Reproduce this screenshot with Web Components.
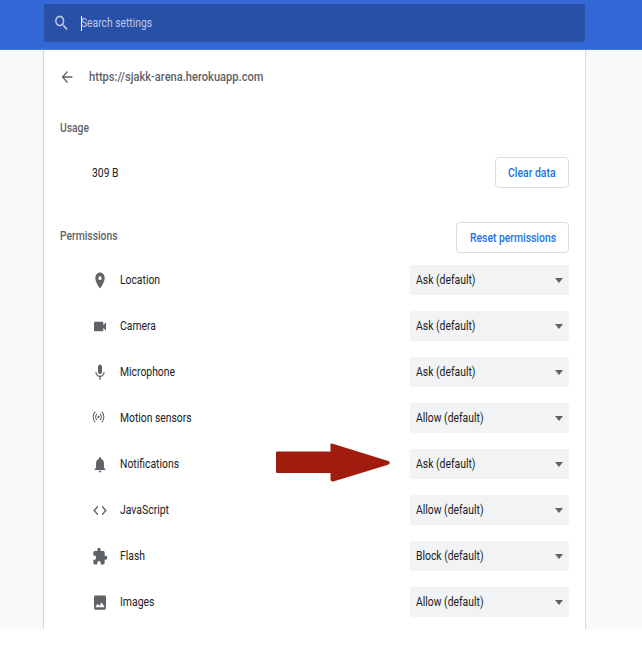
<!DOCTYPE html>
<html lang="en">
<head>
<meta charset="utf-8">
<title>Settings</title>
<style>
html,body{margin:0;height:100%;background:#fff}
body{font:400 12.6px/16px Roboto,sans-serif;color:#202124;overflow:hidden}
</style>
</head>
<body>
<settings-page></settings-page>
<script>
const define = (name, html, setup) => customElements.define(name, class extends HTMLElement {
  connectedCallback() {
    if (this.shadowRoot) return;
    const t = document.createElement('template');
    t.innerHTML = html;
    this.attachShadow({ mode: 'open' }).append(t.content.cloneNode(true));
    if (setup) setup(this, this.shadowRoot);
  }
});

// Narrow label: condenses its text horizontally to the width given in "w".
define('narrow-text', `<style>
:host{display:block;white-space:nowrap;flex:none;overflow:visible}
span{display:inline-block;transform-origin:0 50%}
</style><span></span>`, (host, root) => {
  const s = root.querySelector('span'), w = +host.getAttribute('w');
  s.textContent = host.getAttribute('text');
  host.style.width = w + 'px';
  s.style.transform = `scaleX(${w / s.getBoundingClientRect().width})`;
});

const icons = {
  search: '<path d="M15.5 14h-.79l-.28-.27A6.47 6.47 0 0 0 16 9.5 6.5 6.5 0 1 0 9.500 16c1.610 0 3.090-.59 4.230-1.570l.27.28v.79l5 4.990L20.490 19l-4.990-5zm-6 0C7.010 14 5 11.990 5 9.500S7.010 5 9.500 5 14 7.010 14 9.500 11.990 14 9.500 14z"/>',
  back: '<path d="M20 11H7.830l5.590-5.590L12 4l-8 8 8 8 1.410-1.410L7.830 13H20v-2z"/>',
  location: '<path d="M12 2C8.130 2 5 5.130 5 9c0 5.250 7 13 7 13s7-7.750 7-13c0-3.870-3.130-7-7-7zm0 9.500a2.500 2.500 0 1 1 0-5 2.500 2.500 0 0 1 0 5z"/>',
  camera: '<path d="M17 10.500V7c0-.55-.45-1-1-1H4c-.55 0-1 .45-1 1v10c0 .55.45 1 1 1h12c.55 0 1-.45 1-1v-3.500l4 4v-11l-4 4z"/>',
  mic: '<path d="M12 14c1.660 0 3-1.340 3-3V5c0-1.660-1.340-3-3-3S9 3.340 9 5v6c0 1.660 1.340 3 3 3zm5.300-3c0 3-2.540 5.100-5.300 5.100S6.700 14 6.700 11H5c0 3.410 2.720 6.230 6 6.720V21h2v-3.280c3.280-.48 6-3.300 6-6.720h-1.700z"/>',
  motion: '<g fill="none" stroke="currentColor" stroke-width="1.900"><path d="M6 4.200C.8 8.500.8 15.500 6 19.800M18 4.200c5.200 4.300 5.200 11.300 0 15.600M9 7.500c-3.100 2.700-3.100 6.300 0 9M15 7.500c3.100 2.700 3.100 6.300 0 9"/></g><circle cx="12" cy="12" r="2"/>',
  bell: '<path d="M12 22c1.100 0 2-.9 2-2h-4a2 2 0 0 0 2 2zm6-6v-5c0-3.070-1.640-5.640-4.500-6.320V4a1.500 1.500 0 0 0-3 0v.68C7.630 5.360 6 7.920 6 11v5l-2 2v1h16v-1l-2-2z"/>',
  code: '<path d="M9.400 16.600L4.800 12l4.600-4.600L8 6l-6 6 6 6 1.400-1.400zm5.200 0l4.600-4.600-4.600-4.600L16 6l6 6-6 6-1.400-1.400z"/>',
  puzzle: '<path d="M20.500 11H19V7c0-1.100-.9-2-2-2h-4V3.500a2.500 2.500 0 0 0-5 0V5H4c-1.100 0-1.990.9-1.990 2v3.800H3.500c1.490 0 2.700 1.210 2.700 2.700s-1.210 2.700-2.700 2.700H2V20c0 1.100.9 2 2 2h3.800v-1.500c0-1.490 1.210-2.700 2.700-2.700s2.700 1.210 2.700 2.700V22H17c1.100 0 2-.9 2-2v-4h1.500a2.500 2.500 0 0 0 0-5z"/>',
  image: '<path d="M21 19V5c0-1.100-.9-2-2-2H5c-1.100 0-2 .9-2 2v14c0 1.100.9 2 2 2h14c1.100 0 2-.9 2-2zM8.500 13.500l2.500 3.010L14.500 12l4.500 6H5l3.500-4.500z"/>'
};
define('ui-icon', `<style>
:host{display:block;flex:none;width:16px;height:19px;color:#5f6368}
svg{display:block;width:100%;height:100%;fill:currentColor}
</style><svg viewBox="0 0 24 24" preserveAspectRatio="none"></svg>`, (host, root) => {
  root.querySelector('svg').innerHTML = icons[host.getAttribute('name')];
});

define('search-bar', `<style>
:host{display:block;position:relative;box-sizing:border-box;height:50px;padding:4px 57px 0 44px;background:#3367d6;border-bottom:1px solid #4b7bdd}
.field{box-sizing:border-box;height:38px;display:flex;align-items:center;padding:0 0 0 9px;background:#2850a7;border-radius:2px;color:#bdcae5}
ui-icon{width:17px;height:20px;color:#bdcae5}
i{width:1px;height:15px;background:#fff;margin-left:11px}
narrow-text{margin-left:-1px}
</style><div class="field"><ui-icon name="search"></ui-icon><i></i><narrow-text text="Search settings" w="71"></narrow-text></div>`);

define('outline-button', `<style>
:host{display:flex;flex:none;box-sizing:border-box;height:31px;padding:0 12.500px;align-items:center;border:1px solid #dadce0;border-radius:4px;color:#1a73e8;font-weight:500}
</style><slot></slot>`);

define('select-box', `<style>
:host{display:flex;box-sizing:border-box;width:159px;height:30px;padding:0 6px;align-items:center;justify-content:space-between;background:#f1f3f4;border-radius:3px}
svg{display:block;width:8px;height:5px;margin-top:1px;fill:#5f6368}
</style><slot></slot><svg viewBox="0 0 8 5" preserveAspectRatio="none"><path d="M0 0h8L4 5z"/></svg>`);

const rows = [
  ['location', 'Location', 40, 'Ask', 59.5], ['camera', 'Camera', 36, 'Ask', 59.5],
  ['mic', 'Microphone', 55, 'Ask', 59.5], ['motion', 'Motion sensors', 71.5, 'Allow', 67.5],
  ['bell', 'Notifications', 59, 'Ask', 59.5], ['code', 'JavaScript', 49, 'Allow', 67.5],
  ['puzzle', 'Flash', 25, 'Block', 67.5], ['image', 'Images', 34.5, 'Allow', 67.5]
];
define('permission-list', `<style>
:host{display:block}
.row{display:flex;height:46px;align-items:center;padding-left:32px}
.label{margin-left:12px;flex:1}
ui-icon[name=motion]{width:13px;height:16px;margin:-3px 3px 0 0}
</style>` + rows.map(([icon, label, w, value, vw]) => `<div class="row"><ui-icon name="${icon}"></ui-icon><narrow-text class="label" text="${label}" w="${w}"></narrow-text><select-box><narrow-text text="${value} (default)" w="${vw}"></narrow-text></select-box></div>`).join(''));

define('pointer-arrow', `<style>
:host{display:block;position:absolute;left:275px;top:442px;width:116px;height:41px}
svg{display:block}
</style><svg width="116" height="41"><path d="M2 10.500H56.500V2.500L113 20Q115 21 112 22L58 38.500 56.500 38V30H2Z" fill="#a01c0e" stroke="#a01c0e" stroke-width="2" stroke-linejoin="round"/></svg>`);

define('settings-page', `<style>
:host{display:block;height:629px;overflow:hidden;background:#f8f9fa;position:relative}
main{box-sizing:border-box;width:541px;height:579px;margin-left:44px;padding:0 16px;background:#fff;box-shadow:0 0 0 1px #d9dadc,0 0 1px 1px #dfe0e2}
.title,.usage,.permissions{display:flex;align-items:center}
.title{height:54px;color:#5f6368;font-weight:500}
.title ui-icon{margin-left:-1px;width:16px;height:18px;margin-top:-1px}
.title narrow-text{margin-left:13.500px}
h2{margin:0;font:inherit;font-weight:500;color:#5f6368}
.heading{height:48px;display:flex;align-items:center}
.usage{height:41px;padding-left:32px;justify-content:space-between}
.permissions{height:31px;margin-top:29px;justify-content:space-between}
.permissions h2{margin-top:-3px}
permission-list{margin-top:4px}
</style>
<search-bar></search-bar>
<main>
<div class="title"><ui-icon name="back"></ui-icon><narrow-text text="https://sjakk-arena.herokuapp.com" w="174.500"></narrow-text></div>
<div class="heading"><h2><narrow-text text="Usage" w="29"></narrow-text></h2></div>
<div class="usage"><narrow-text text="309 B" w="26.500"></narrow-text><outline-button><narrow-text text="Clear data" w="47.500"></narrow-text></outline-button></div>
<div class="permissions"><h2><narrow-text text="Permissions" w="57.500"></narrow-text></h2><outline-button><narrow-text text="Reset permissions" w="86"></narrow-text></outline-button></div>
<permission-list></permission-list>
</main>
<pointer-arrow></pointer-arrow>`);
</script>
</body>
</html>
